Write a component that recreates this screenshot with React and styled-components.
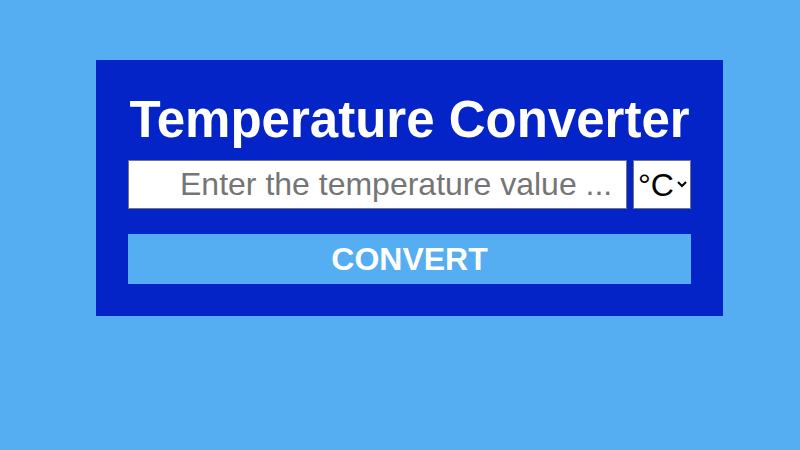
import React from "react";
import styled, { createGlobalStyle } from "styled-components";

const Global = createGlobalStyle`
  html, body {
    margin: 0;
    padding: 0;
    background: #55adf2;
    font-family: "Liberation Sans", Arial, sans-serif;
  }
  body { height: 450px; overflow: hidden; }
`;

const Panel = styled.div`
  box-sizing: border-box;
  width: 627px;
  margin: 60px 0 0 96px;
  padding: 31px 32px 32px;
  background: #0424c8;
`;

const Title = styled.h1`
  margin: 0 0 12px;
  font-size: 51px;
  line-height: 57px;
  font-weight: bold;
  color: #ffffff;
  text-align: center;
  white-space: nowrap;
`;

const Row = styled.div`
  display: flex;
  gap: 6px;
  height: 49px;
`;

const TempInput = styled.input`
  box-sizing: border-box;
  width: 499px;
  height: 49px;
  margin: 0;
  padding: 0 0 0 51px;
  border: 1px solid #767676;
  background: #ffffff;
  font-family: "Liberation Sans", Arial, sans-serif;
  font-size: 32px;
  color: #000;
  outline: none;
  &::placeholder { color: #757575; }
`;

const UnitSelect = styled.select`
  box-sizing: border-box;
  width: 58px;
  height: 49px;
  margin: 0;
  border: 1px solid #767676;
  border-radius: 0;
  background: #ffffff;
  font-family: "Liberation Sans", Arial, sans-serif;
  font-size: 32px;
  color: #000;
`;

const ConvertButton = styled.button`
  display: block;
  box-sizing: border-box;
  width: 100%;
  height: 50px;
  margin: 25px 0 0;
  padding: 0;
  border: none;
  background: #55adf2;
  color: #ffffff;
  font-family: "Liberation Sans", Arial, sans-serif;
  font-size: 32px;
  font-weight: bold;
  cursor: pointer;
`;

export default function App() {
  return (
    <>
      <Global />
      <Panel>
        <Title>Temperature Converter</Title>
        <Row>
          <TempInput type="text" placeholder="Enter the temperature value ..." />
          <UnitSelect defaultValue="C">
            <option value="C">°C</option>
            <option value="F">°F</option>
            <option value="K">K</option>
          </UnitSelect>
        </Row>
        <ConvertButton>CONVERT</ConvertButton>
      </Panel>
    </>
  );
}
